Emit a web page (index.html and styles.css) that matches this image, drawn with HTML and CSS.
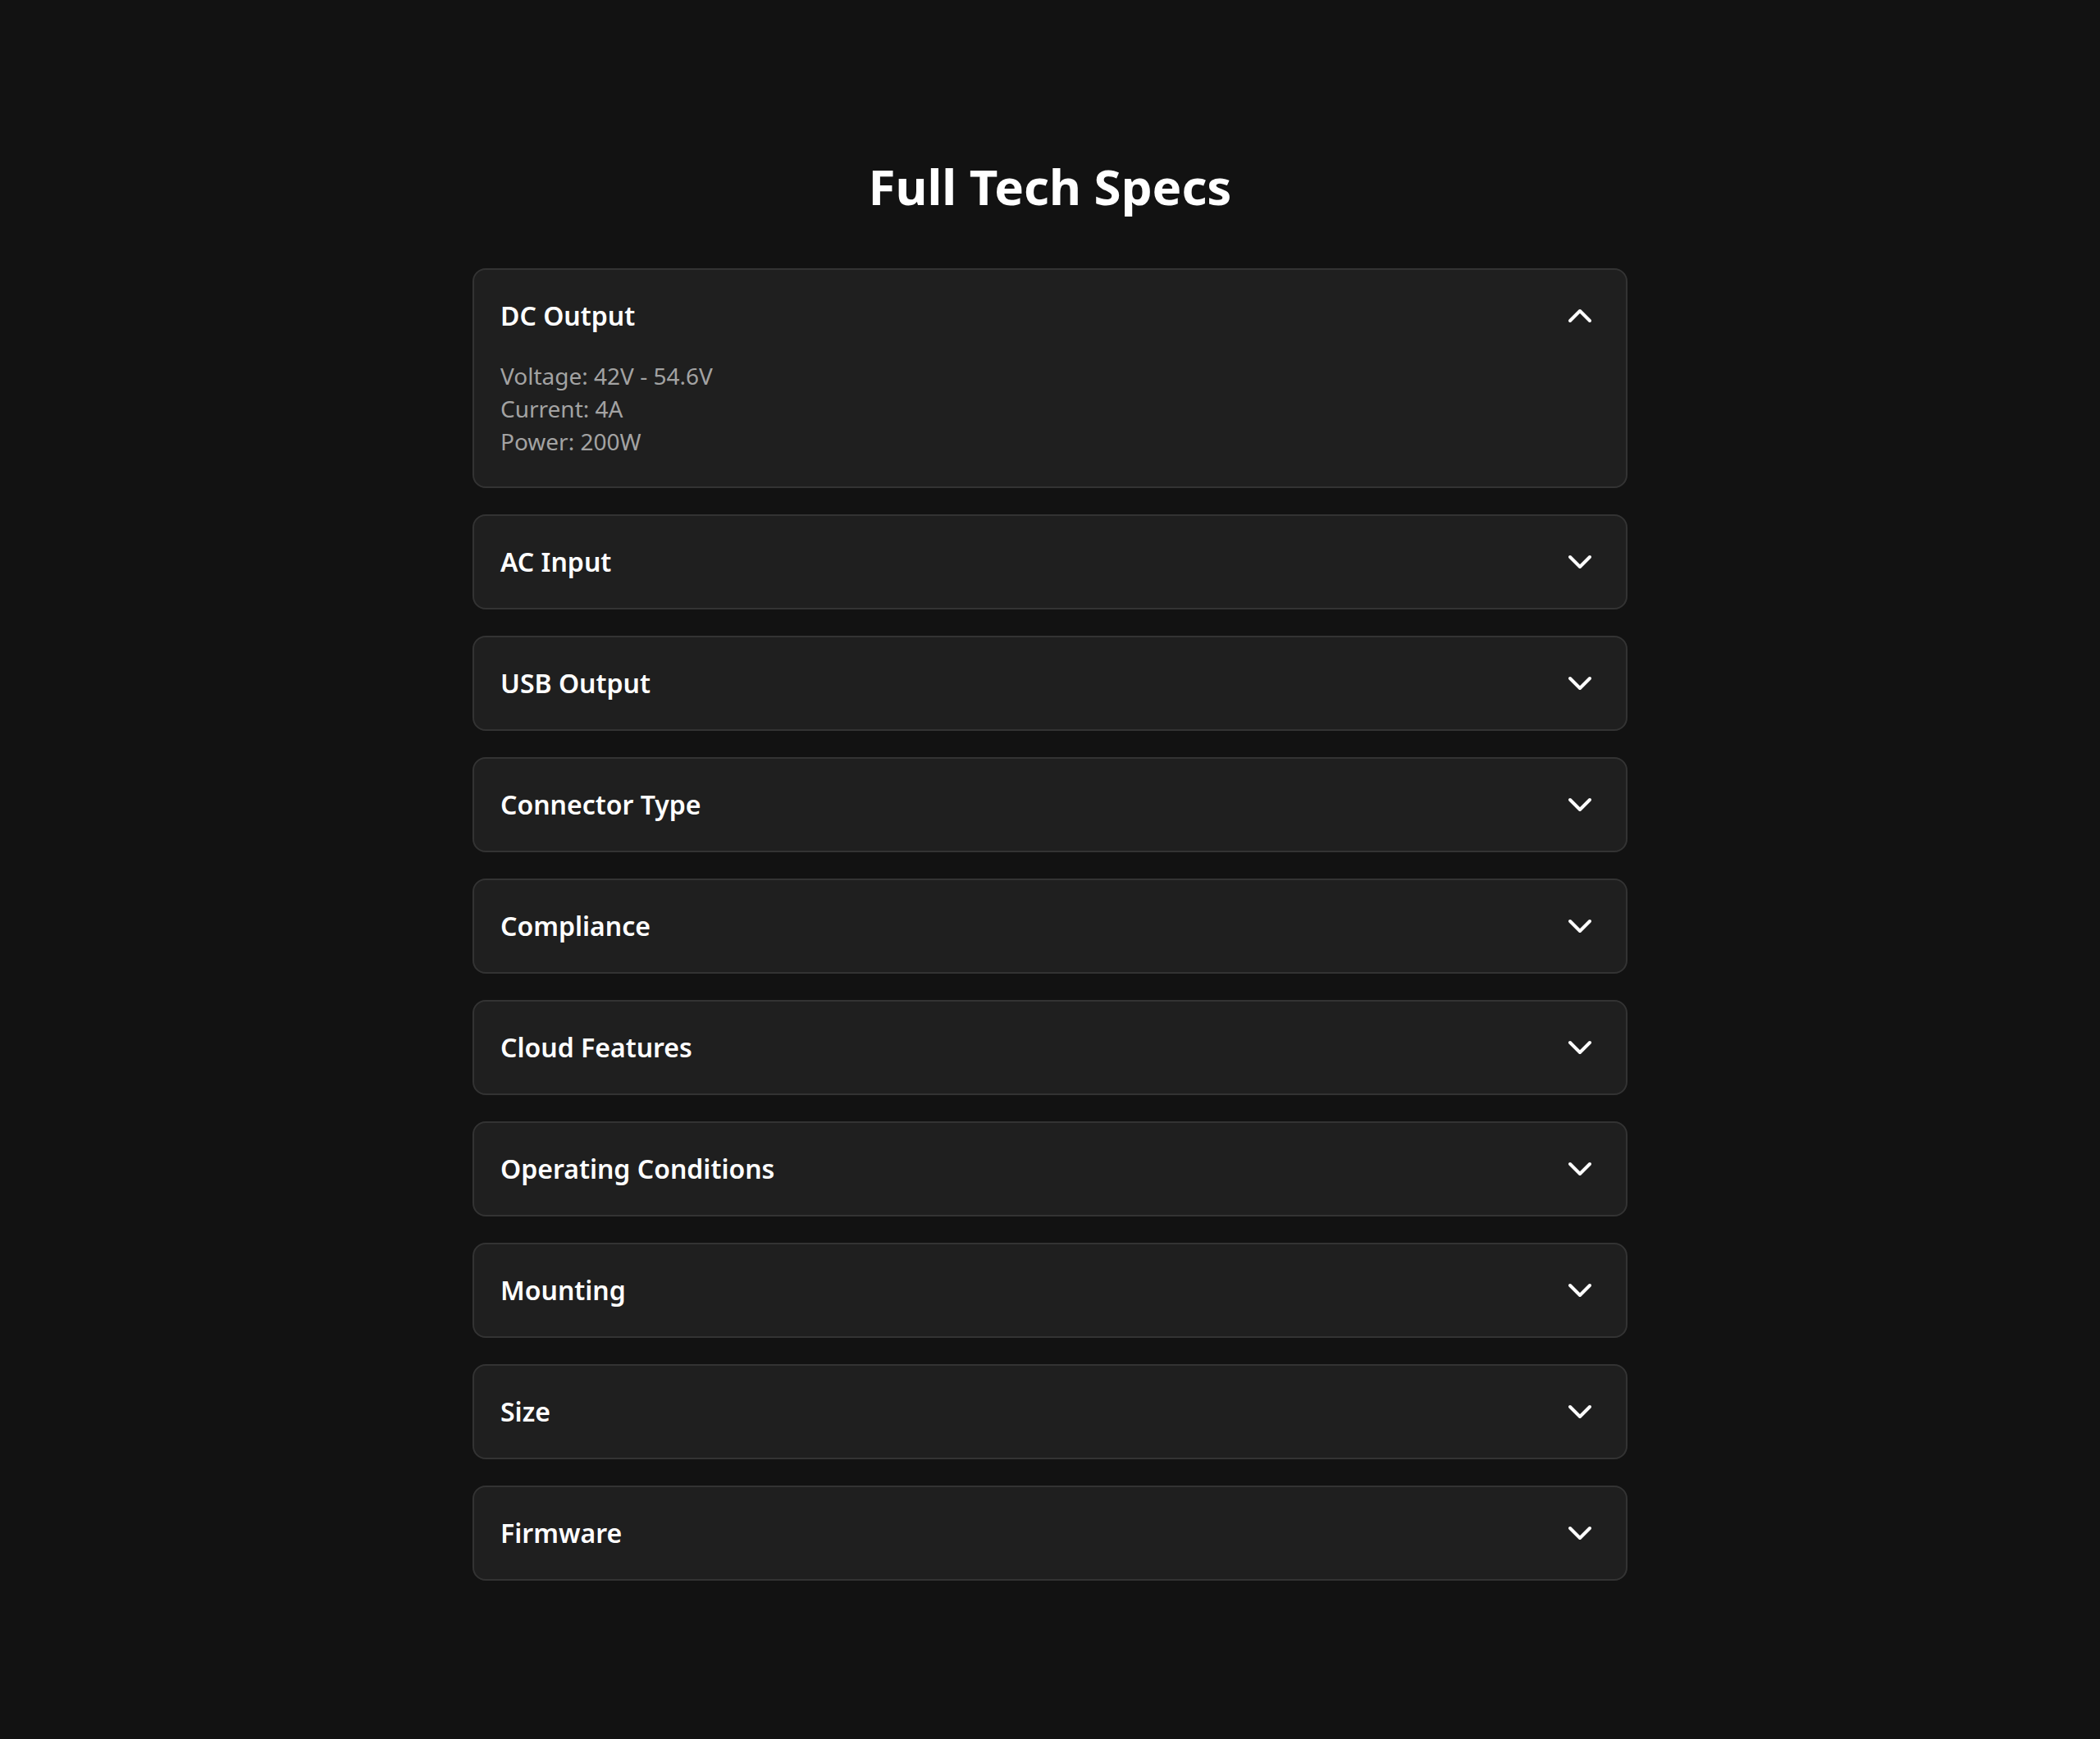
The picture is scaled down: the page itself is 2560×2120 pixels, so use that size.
FILE: index.html
```html
<!DOCTYPE html>
<html lang="en">
<head>
<meta charset="utf-8">
<title>Full Tech Specs</title>
<link rel="stylesheet" href="styles.css">
</head>
<body>
<main class="specs">
  <h1 class="specs-title">Full Tech Specs</h1>
  <div class="accordion">
    <section class="item open">
      <div class="item-head">
        <span class="item-label">DC Output</span>
        <svg class="chev" viewBox="0 0 24 24" fill="none" stroke="currentColor" stroke-width="2" stroke-linecap="round" stroke-linejoin="round"><path d="m6 15 6-6 6 6"/></svg>
      </div>
      <div class="item-body">
        <p>Voltage: 42V - 54.6V</p>
        <p>Current: 4A</p>
        <p>Power: 200W</p>
      </div>
    </section>
    <section class="item">
      <div class="item-head"><span class="item-label">AC Input</span><svg class="chev" viewBox="0 0 24 24" fill="none" stroke="currentColor" stroke-width="2" stroke-linecap="round" stroke-linejoin="round"><path d="m6 9 6 6 6-6"/></svg></div>
    </section>
    <section class="item">
      <div class="item-head"><span class="item-label">USB Output</span><svg class="chev" viewBox="0 0 24 24" fill="none" stroke="currentColor" stroke-width="2" stroke-linecap="round" stroke-linejoin="round"><path d="m6 9 6 6 6-6"/></svg></div>
    </section>
    <section class="item">
      <div class="item-head"><span class="item-label">Connector Type</span><svg class="chev" viewBox="0 0 24 24" fill="none" stroke="currentColor" stroke-width="2" stroke-linecap="round" stroke-linejoin="round"><path d="m6 9 6 6 6-6"/></svg></div>
    </section>
    <section class="item">
      <div class="item-head"><span class="item-label">Compliance</span><svg class="chev" viewBox="0 0 24 24" fill="none" stroke="currentColor" stroke-width="2" stroke-linecap="round" stroke-linejoin="round"><path d="m6 9 6 6 6-6"/></svg></div>
    </section>
    <section class="item">
      <div class="item-head"><span class="item-label">Cloud Features</span><svg class="chev" viewBox="0 0 24 24" fill="none" stroke="currentColor" stroke-width="2" stroke-linecap="round" stroke-linejoin="round"><path d="m6 9 6 6 6-6"/></svg></div>
    </section>
    <section class="item">
      <div class="item-head"><span class="item-label">Operating Conditions</span><svg class="chev" viewBox="0 0 24 24" fill="none" stroke="currentColor" stroke-width="2" stroke-linecap="round" stroke-linejoin="round"><path d="m6 9 6 6 6-6"/></svg></div>
    </section>
    <section class="item">
      <div class="item-head"><span class="item-label">Mounting</span><svg class="chev" viewBox="0 0 24 24" fill="none" stroke="currentColor" stroke-width="2" stroke-linecap="round" stroke-linejoin="round"><path d="m6 9 6 6 6-6"/></svg></div>
    </section>
    <section class="item">
      <div class="item-head"><span class="item-label">Size</span><svg class="chev" viewBox="0 0 24 24" fill="none" stroke="currentColor" stroke-width="2" stroke-linecap="round" stroke-linejoin="round"><path d="m6 9 6 6 6-6"/></svg></div>
    </section>
    <section class="item">
      <div class="item-head"><span class="item-label">Firmware</span><svg class="chev" viewBox="0 0 24 24" fill="none" stroke="currentColor" stroke-width="2" stroke-linecap="round" stroke-linejoin="round"><path d="m6 9 6 6 6-6"/></svg></div>
    </section>
  </div>
</main>
</body>
</html>
```
FILE: styles.css
```css
* { box-sizing: border-box; }

html, body {
  margin: 0;
  padding: 0;
  background: #121212;
  color: #ffffff;
  font-family: "Noto Sans", "Open Sans", "DejaVu Sans", sans-serif;
}

body {
  min-height: 2120px;
}

.specs {
  max-width: 1408px;
  margin: 0 auto;
  padding-top: 191px;
}

.specs-title {
  margin: 0 0 64px;
  font-size: 60px;
  line-height: 72px;
  font-weight: 700;
  text-align: center;
  color: #ffffff;
}

.accordion {
  display: flex;
  flex-direction: column;
  gap: 32px;
}

.item {
  background: #1f1f1f;
  border: 2px solid #333333;
  border-radius: 16px;
}

.item-head {
  display: flex;
  align-items: center;
  justify-content: space-between;
  padding: 32px;
}

.item-label {
  font-size: 32px;
  line-height: 48px;
  font-weight: 600;
  color: #ffffff;
}

.chev {
  width: 48px;
  height: 48px;
  color: #ffffff;
  flex: none;
}

.item-body {
  padding: 0 32px 35px;
  margin-top: -3px;
}

.item-body p {
  margin: 0;
  font-size: 28px;
  line-height: 40px;
  color: #a3a3a3;
}
```
